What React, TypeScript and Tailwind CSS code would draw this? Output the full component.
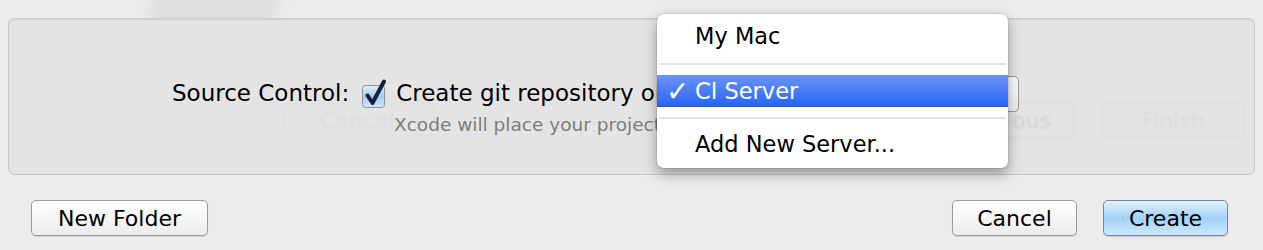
import { ReactNode } from "react";

function AquaButton({
  children,
  width,
  primary = false,
}: {
  children: ReactNode;
  width: string;
  primary?: boolean;
}) {
  return (
    <button
      className={
        primary
          ? `${width} h-[36px] rounded-[5px] border border-[#6f87a6] bg-gradient-to-b from-[#e0f1fe] via-[#a3d1f8] to-[#cbe9fe] text-[22px] text-black shadow-[0_1px_1px_rgba(0,0,0,0.15)]`
          : `${width} h-[36px] rounded-[5px] border border-[#9b9b9b] bg-gradient-to-b from-[#ffffff] via-[#f6f6f6] to-[#ececec] text-[22px] text-black shadow-[0_1px_1px_rgba(0,0,0,0.12)]`
      }
    >
      {children}
    </button>
  );
}

function Checkbox() {
  return (
    <svg width="27" height="30" viewBox="0 0 27 30" className="shrink-0">
      <defs>
        <linearGradient id="cb" x1="0" y1="0" x2="0" y2="1">
          <stop offset="0" stopColor="#e2f0fc" />
          <stop offset="0.5" stopColor="#a6cbf1" />
          <stop offset="1" stopColor="#d3e8fb" />
        </linearGradient>
      </defs>
      <rect x="1.5" y="6.5" width="22" height="22" rx="3" fill="url(#cb)" stroke="#8a8f98" />
      <path
        d="M6.5 16.5 L11.5 24 L23 2.5"
        fill="none"
        stroke="#0f2440"
        strokeWidth="4"
        strokeLinecap="round"
        strokeLinejoin="round"
      />
    </svg>
  );
}

export default function App() {
  return (
    <div className="relative h-[250px] w-[1263px] overflow-hidden bg-[#ececec] font-['Lucida_Grande','DejaVu_Sans',sans-serif]">
      {/* blurred sheet behind the dialog */}
      <div className="absolute left-[150px] top-[-40px] h-[110px] w-[125px] rotate-[8deg] rounded-[14px] bg-[#dedede] blur-[6px]" />

      <div className="px-[8px] pt-[18px]">
        <div className="relative h-[157px] rounded-[6px] border border-[#c9c9c9] bg-[#e4e4e4] shadow-[inset_0_1px_2px_rgba(0,0,0,0.08)]">
          {/* ghosted buttons of the sheet below */}
          <div className="absolute left-[275px] top-[84px] flex h-[34px] w-[150px] items-center rounded-[5px] border border-[#dddddd] pl-[35px] text-[22px] text-[#dcdcdc] blur-[1px]">
            Cancel
          </div>
          <div className="absolute left-[940px] top-[83px] flex h-[36px] w-[126px] items-center justify-end rounded-[5px] border border-[#d6d6d6] pr-[23px] text-[22px] text-[#cfcfcf] blur-[1px]">
            ous
          </div>
          <div className="absolute left-[1093px] top-[83px] flex h-[36px] w-[143px] items-center justify-center rounded-[5px] border border-[#dcdcdc] text-[22px] text-[#d9d9d9] blur-[1px]">
            Finish
          </div>

          <div className="relative flex flex-col pl-[163px] pt-[57px]">
            <div className="flex w-[847px] items-end">
              <span className="text-[23px] leading-[28px] text-black">Source Control:</span>
              <span className="ml-[12px] -mb-[2px]">
                <Checkbox />
              </span>
              <span className="ml-[8px] whitespace-nowrap text-[23px] leading-[28px] text-black">
                Create git repository on
              </span>
              <div className="ml-[6px] mb-[-5px] h-[36px] flex-1 rounded-[5px] border border-[#9a9a9a] bg-gradient-to-b from-white to-[#ededed]" />
            </div>
            <span className="ml-[222px] mt-[6px] whitespace-nowrap text-[18.5px] leading-[24px] text-[#7d7d7d]">
              Xcode will place your project under version control
            </span>
          </div>
        </div>
      </div>

      <div className="mt-[25px] flex items-center justify-between pl-[31px] pr-[35px]">
        <AquaButton width="w-[177px]">New Folder</AquaButton>
        <div className="flex gap-[26px]">
          <AquaButton width="w-[125px]">Cancel</AquaButton>
          <AquaButton width="w-[125px]" primary>
            Create
          </AquaButton>
        </div>
      </div>

      {/* popup menu */}
      <div className="absolute left-[657px] top-[14px] w-[351px] rounded-[7px] bg-white pb-[7px] pt-[6px] text-[22.5px] text-black shadow-[0_6px_14px_rgba(0,0,0,0.35),0_0_0_1px_rgba(0,0,0,0.08)]">
        <div className="flex h-[33px] items-center pl-[38px]">My Mac</div>
        <div className="flex h-[22px] items-center px-[2px]">
          <div className="h-[2px] w-full bg-[#e2e2e2]" />
        </div>
        <div className="flex h-[32px] items-center border-b border-[#1752e6] bg-gradient-to-b from-[#6c93f6] to-[#2764f3] pt-[2px] text-white">
          <span className="w-[38px] pl-[9px] text-[28px] leading-none font-bold">✓</span>
          <span>CI Server</span>
        </div>
        <div className="flex h-[22px] items-center px-[2px]">
          <div className="h-[2px] w-full bg-[#e2e2e2]" />
        </div>
        <div className="flex h-[32px] items-center pl-[38px]">Add New Server...</div>
      </div>
    </div>
  );
}
